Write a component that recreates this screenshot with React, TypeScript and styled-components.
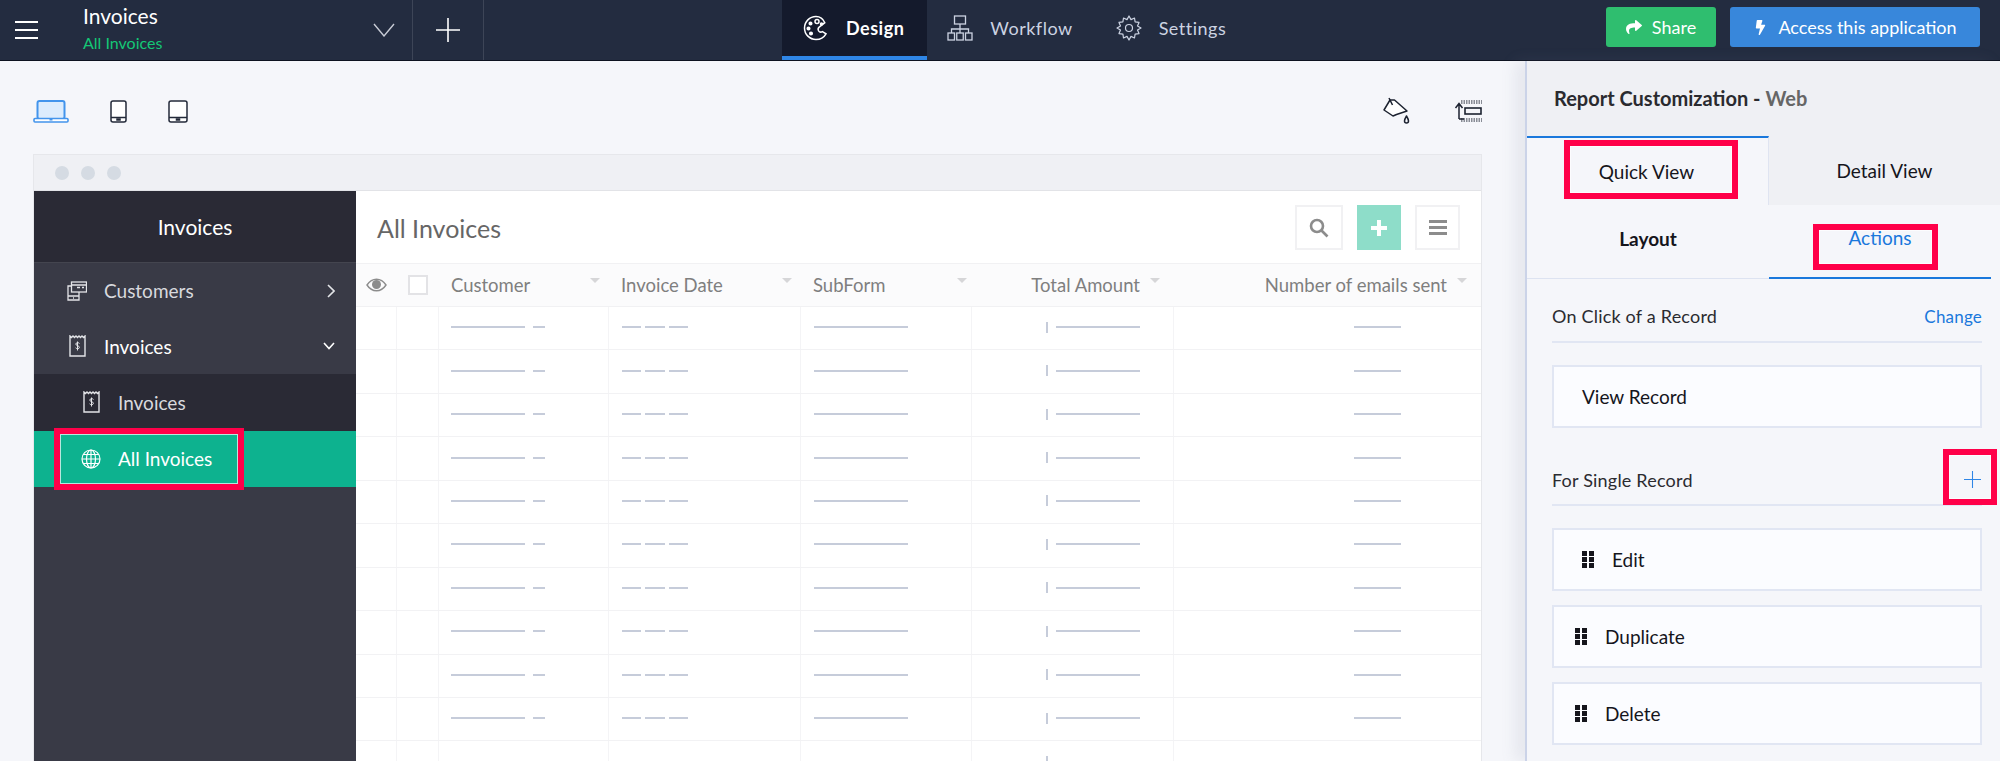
import React from 'react';
import styled, { createGlobalStyle } from 'styled-components';
import { FaBolt, FaShare } from 'react-icons/fa';

const GlobalStyle = createGlobalStyle`
  html, body {
    margin: 0;
    padding: 0;
    background: #f5f6fa;
    font-family: "Lato", "Liberation Sans", sans-serif;
  }
  * { box-sizing: border-box; }
`;

const Page = styled.div`
  width: 2000px;
  height: 761px;
  overflow: hidden;
  display: flex;
  flex-direction: column;
`;

/* top bar */
const TopBar = styled.header`
  flex: none;
  height: 61px;
  background: #232c40;
  border-bottom: 1px solid #0d1220;
  display: flex;
  align-items: stretch;
`;

const BurgerCell = styled.div`
  width: 83px;
  padding-left: 15px;
  display: flex;
  align-items: center;
  color: #fff;
`;

const AppTitle = styled.div`
  width: 329px;
  display: flex;
  align-items: center;
  justify-content: space-between;
  padding-right: 17px;
  color: #fff;
`;

const AppName = styled.div`
  font-size: 21px;
  line-height: 26px;
  margin-top: -2px;
`;

const AppSub = styled.div`
  font-size: 16px;
  line-height: 24px;
  margin-top: 2px;
  color: #14c776;
`;

const PlusCell = styled.div`
  width: 72px;
  border-left: 1px solid #3d4557;
  border-right: 1px solid #3d4557;
  display: flex;
  align-items: center;
  justify-content: center;
  color: #fff;
`;

const Nav = styled.nav`
  margin-left: 298px;
  display: flex;
`;

const NavTab = styled.div<{ $active?: boolean }>`
  display: flex;
  align-items: center;
  gap: 17px;
  padding: 0 23px 0 ${p => (p.$active ? 21 : 20)}px;
  background: ${p => (p.$active ? '#141a2c' : 'transparent')};
  border-bottom: 4px solid ${p => (p.$active ? '#2f86e6' : 'transparent')};
  color: ${p => (p.$active ? '#fff' : '#ccd3e2')};
  font-size: 18px;
  font-weight: ${p => (p.$active ? 700 : 400)};
  letter-spacing: 0.5px;
`;

const TopActions = styled.div`
  margin-left: auto;
  padding: 7px 20px 0 0;
  display: flex;
  align-items: flex-start;
  gap: 14px;
`;

const TopButton = styled.div<{ $color: string; $width: number }>`
  width: ${p => p.$width}px;
  height: 40px;
  border-radius: 3px;
  background: ${p => p.$color};
  color: #fff;
  font-size: 18px;
  display: flex;
  align-items: center;
  justify-content: center;
  gap: 10px;
`;

/* work area */
const Main = styled.div`
  flex: 1;
  min-height: 0;
  display: flex;
`;

const Canvas = styled.main`
  flex: 1;
  min-width: 0;
  padding: 0 43px 0 33px;
  display: flex;
  flex-direction: column;
`;

const CanvasTools = styled.div`
  flex: none;
  height: 93px;
  padding-top: 7px;
  display: flex;
  align-items: center;
`;

const DeviceGroup = styled.div`
  display: flex;
  align-items: center;
  gap: 41px;
`;

const ToolGroup = styled.div`
  margin-left: auto;
  display: flex;
  align-items: center;
  gap: 44px;
  color: #1c2230;
`;

const Window = styled.div`
  flex: 1;
  min-height: 0;
  display: flex;
  flex-direction: column;
  border: 1px solid #e6e7eb;
  border-bottom: 0;
  background: #fff;
`;

const WindowChrome = styled.div`
  flex: none;
  height: 36px;
  background: #eff0f4;
  border-bottom: 1px solid #e2e3e7;
  padding-left: 21px;
  display: flex;
  align-items: center;
  gap: 12px;
`;

const Dot = styled.span`
  width: 14px;
  height: 14px;
  border-radius: 50%;
  background: #d5dbe3;
`;

const WindowBody = styled.div`
  flex: 1;
  min-height: 0;
  display: flex;
`;

/* preview sidebar */
const Sidebar = styled.aside`
  flex: none;
  width: 322px;
  background: #393a46;
  display: flex;
  flex-direction: column;
`;

const SideHead = styled.div`
  height: 72px;
  background: #2a2a35;
  border-bottom: 1px solid #44454f;
  color: #fff;
  font-size: 21px;
  display: flex;
  align-items: center;
  justify-content: center;
`;

const SideRow = styled.div<{ $tone?: 'sub' | 'active'; $bright?: boolean }>`
  position: relative;
  height: ${p => (p.$tone ? 56.5 : 55.5)}px;
  padding: 0 21px 0 ${p => (p.$tone ? 47 : 33)}px;
  display: flex;
  align-items: center;
  gap: 17px;
  font-size: 19px;
  color: ${p => (p.$bright ? '#fff' : '#d8d9de')};
  background: ${p => (p.$tone === 'sub' ? '#2a2a35' : p.$tone === 'active' ? '#0db28f' : 'transparent')};
`;

const SideIcon = styled.span`
  width: 20px;
  display: flex;
  justify-content: center;
`;

const SideArrow = styled.span`
  margin-left: auto;
  display: flex;
`;

/* preview table */
const Report = styled.section`
  flex: 1;
  min-width: 0;
  display: flex;
  flex-direction: column;
  overflow: hidden;
`;

const ReportTop = styled.div`
  flex: none;
  height: 72px;
  padding: 14px 21px 13px 21px;
  display: flex;
  align-items: center;
`;

const ReportTitle = styled.h2`
  margin: 0 auto 0 0;
  font-size: 25px;
  font-weight: 400;
  color: #666;
`;

const SquareButton = styled.div<{ $width: number; $fill?: boolean }>`
  width: ${p => p.$width}px;
  height: 45px;
  margin-left: 14px;
  border: ${p => (p.$fill ? 'none' : '2px solid #f1f1f3')};
  background: ${p => (p.$fill ? '#8eddc9' : '#fff')};
  color: ${p => (p.$fill ? '#fff' : '#8c8c8c')};
  display: flex;
  align-items: center;
  justify-content: center;
`;

const COLUMNS = '41px 42px 170px 192px 171px 202px 308px';

const HeadRow = styled.div`
  flex: none;
  height: 44px;
  display: grid;
  grid-template-columns: ${COLUMNS};
  background: #fbfbfc;
  border-top: 1px solid #f1f1f3;
  border-bottom: 1px solid #f1f1f3;
`;

const HeadCell = styled.div<{ $end?: boolean; $pad?: number }>`
  display: flex;
  align-items: center;
  justify-content: ${p => (p.$end ? 'flex-end' : 'space-between')};
  gap: 10px;
  padding: 0 ${p => p.$pad ?? 9}px 0 12px;
  font-size: 18.5px;
  color: #7f7f7f;
  white-space: nowrap;
`;

const IconCell = styled.div`
  display: flex;
  align-items: center;
  justify-content: center;
`;

const CheckBox = styled.span`
  width: 20px;
  height: 20px;
  background: #fff;
  border: 2px solid #e3e3e6;
`;

const Caret = styled.span`
  flex: none;
  width: 0;
  height: 0;
  margin-top: -10px;
  border-left: 5px solid transparent;
  border-right: 5px solid transparent;
  border-top: 5px solid #d6d6d8;
`;

const DataRow = styled.div`
  flex: none;
  height: 43.45px;
  display: grid;
  grid-template-columns: ${COLUMNS};
  border-bottom: 1px solid #f2f2f4;
`;

const DataCell = styled.div<{ $align?: 'end'; $left?: number; $right?: number; $gap?: number }>`
  display: flex;
  align-items: center;
  justify-content: ${p => (p.$align === 'end' ? 'flex-end' : 'flex-start')};
  gap: ${p => p.$gap ?? 8}px;
  padding: 0 ${p => p.$right ?? 0}px 2px ${p => p.$left ?? 0}px;
  border-right: 1px solid #f4f4f6;
`;

const Dash = styled.span<{ $w: number }>`
  width: ${p => p.$w}px;
  height: 2px;
  background: #c6ccda;
`;

const Tick = styled.span`
  width: 2px;
  height: 11px;
  background: #c6ccda;
`;

/* customization panel */
const Panel = styled.aside`
  flex: none;
  width: 475px;
  background: #f5f6fa;
  border-left: 2px solid #cbd3e8;
  box-shadow: -10px 0 14px rgba(120, 130, 160, 0.12);
  display: flex;
  flex-direction: column;
  position: relative;
`;

const PanelHead = styled.div`
  height: 75px;
  padding: 0 0 1px 27px;
  background: #eff0f4;
  display: flex;
  align-items: center;
  font-size: 20px;
  font-weight: 700;
  color: #2a2a2f;
`;

const PanelHeadMuted = styled.span`
  color: #666;
  margin-left: 5px;
`;

const ViewTabs = styled.div`
  height: 69px;
  display: flex;
`;

const ViewTab = styled.div<{ $active?: boolean }>`
  position: relative;
  display: flex;
  align-items: center;
  justify-content: center;
  width: ${p => (p.$active ? '242px' : 'auto')};
  flex: ${p => (p.$active ? 'none' : 1)};
  padding-right: ${p => (p.$active ? '2px' : '0')};
  font-size: 19px;
  color: #15151c;
  background: ${p => (p.$active ? '#f5f6fa' : '#eff0f4')};
  border-top: ${p => (p.$active ? '2px solid #1a78dc' : 'none')};
  border-right: ${p => (p.$active ? '1px solid #dfe4f1' : 'none')};
`;

const SubTabs = styled.div`
  height: 74px;
  display: flex;
`;

const SubTab = styled.div<{ $active?: boolean }>`
  position: relative;
  width: ${p => (p.$active ? 222 : 242)}px;
  display: flex;
  align-items: center;
  justify-content: center;
  font-size: 19px;
  padding-bottom: 7px;
  color: ${p => (p.$active ? '#1a78dc' : '#15151c')};
  font-weight: ${p => (p.$active ? 400 : 700)};
  border-bottom: ${p => (p.$active ? '2px solid #1a78dc' : '1px solid #dde3f1')};
`;

const PanelBody = styled.div`
  padding: 0 18px 0 25px;
  display: flex;
  flex-direction: column;
`;

const SectionRow = styled.div<{ $tall?: boolean }>`
  position: relative;
  height: ${p => (p.$tall ? 78 : 64)}px;
  padding-bottom: ${p => (p.$tall ? 13 : 14)}px;
  border-bottom: 2px solid #e1e6f3;
  display: flex;
  align-items: flex-end;
  justify-content: space-between;
  font-size: 18px;
  color: #2b2b30;
  letter-spacing: 0.2px;
`;

const ChangeLink = styled.span`
  color: #1a78dc;
  font-size: 17px;
`;

const PlusIcon = styled.span`
  color: #2f86e6;
  display: flex;
  margin: 0 1px 3px 0;
`;

const Card = styled.div<{ $drag?: boolean }>`
  height: 63px;
  margin-top: ${p => (p.$drag ? 14 : 22)}px;
  padding-left: ${p => (p.$drag ? 21 : 28)}px;
  background: #fbfcff;
  border: 2px solid #e1e6f3;
  display: flex;
  align-items: center;
  gap: 18px;
  font-size: 19px;
  color: #15151c;
`;

/* red annotation frames drawn over the screenshot */
const Mark = styled.span`
  position: absolute;
  border: 6px solid #ff0049;
  box-shadow: inset 0 0 0 1px rgba(255, 255, 255, 0.7);
  pointer-events: none;
`;

const QuickMark = styled(Mark)`
  left: 37px;
  top: 2px;
  width: 174px;
  height: 59px;
`;

const ActionsMark = styled(Mark)`
  left: 44px;
  top: 19px;
  width: 125px;
  height: 46px;
`;

const RecordMark = styled(Mark)`
  left: 20px;
  top: -3px;
  width: 190px;
  height: 62px;
`;

const AddMark = styled(Mark)`
  right: -15px;
  top: 21px;
  width: 54px;
  height: 56px;
`;

/* drawn icons */
const Burger = () => (
  <svg width="24" height="18" viewBox="0 0 24 18" fill="none" stroke="currentColor" strokeWidth="2">
    <path d="M0 1h23M0 9h23M0 17h23" />
  </svg>
);

const ChevronDown = () => (
  <svg width="22" height="14" viewBox="0 0 22 14" fill="none" stroke="#c8ccd6" strokeWidth="1.4">
    <path d="M1 1l10 12L21 1" />
  </svg>
);

const ThinPlus = ({ size = 24 }: { size?: number }) => (
  <svg width={size} height={size} viewBox="0 0 24 24" fill="none" stroke="currentColor" strokeWidth={size > 20 ? 1.6 : 1.5}>
    <path d="M12 0v24M0 12h24" />
  </svg>
);

const PaletteIcon = () => (
  <svg width="26" height="26" viewBox="0 0 26 26" fill="none" stroke="currentColor" strokeWidth="1.5">
    <path d="M13 1.5C6.6 1.5 1.5 6.6 1.5 13S6.6 24.5 13 24.5c4.5 0 8-2.2 10-5.7l-3.6-2.2c-1.4.8-3 .4-3.8-.8-.8-1.3-.5-2.8.6-3.7l5.6-4.4C20.200 4 16.800 1.500 13 1.500z" />
    <circle cx="14" cy="6.500" r="2" />
    <circle cx="18.500" cy="9" r="1" fill="currentColor" />
    <circle cx="7.500" cy="8.500" r="1.300" fill="currentColor" />
    <circle cx="5.500" cy="13.500" r="1.300" fill="currentColor" />
    <circle cx="8" cy="18.500" r="1.300" fill="currentColor" />
  </svg>
);

const FlowIcon = () => (
  <svg width="26" height="26" viewBox="0 0 26 26" fill="none" stroke="currentColor" strokeWidth="1.3">
    <rect x="7.500" y="1" width="11" height="8" />
    <path d="M13 9v5M4.500 18v-4h17v4M13 14v4" />
    <rect x="1" y="18" width="6.500" height="7" />
    <rect x="9.750" y="18" width="6.500" height="7" />
    <rect x="18.500" y="18" width="6.500" height="7" />
  </svg>
);

const GearIcon = () => (
  <svg width="26" height="26" viewBox="0 0 26 26" fill="none" stroke="currentColor" strokeWidth="1.2" strokeLinejoin="round">
    <path d="M13 1l2 3.600 3.500-1.600.6 3.900 3.900.5-1.500 3.600L25 13l-3.500 2 1.500 3.600-3.900.5-.6 3.900-3.500-1.600-2 3.600-2-3.600-3.500 1.600-.6-3.900-3.900-.5L4.500 15 1 13l3.500-2L3 7.400l3.900-.5.6-3.900L11 4.600z" />
    <circle cx="13" cy="13" r="3.500" />
  </svg>
);

const LaptopIcon = () => (
  <svg width="36" height="23" viewBox="0 0 36 23">
    <rect x="4.500" y="1" width="27" height="18" rx="2" fill="#dcecfd" stroke="#4394ec" strokeWidth="2" />
    <rect x="1" y="18.500" width="34" height="3.500" rx="1" fill="#fff" stroke="#4394ec" strokeWidth="1.600" />
    <rect x="16.500" y="18.500" width="3" height="2" fill="#4394ec" />
  </svg>
);

const PhoneIcon = () => (
  <svg width="17" height="23" viewBox="0 0 17 23" fill="none" stroke="#232a3a" strokeWidth="1.500">
    <rect x="1" y="1" width="15" height="21" rx="2" fill="#fff" />
    <path d="M1 17.500h15" />
    <rect x="7" y="19" width="3" height="1" fill="#232a3a" />
  </svg>
);

const TabletIcon = () => (
  <svg width="20" height="23" viewBox="0 0 20 23" fill="none" stroke="#232a3a" strokeWidth="1.500">
    <rect x="1" y="1" width="18" height="21" rx="2" fill="#fff" />
    <path d="M1 17.500h18" />
    <rect x="8.500" y="19" width="3" height="1" fill="#232a3a" />
  </svg>
);

const BucketIcon = () => (
  <svg width="28" height="28" viewBox="0 0 28 28" fill="none" stroke="currentColor" strokeWidth="1.500" strokeLinejoin="round">
    <path d="M8 3L2 13l9 6 3.500-1.500L25 14 12.500 3z" fill="#fff" />
    <path d="M7 1l3.500 7" />
    <path d="M24.500 19c-1.200 2-2 3.500-2 5a2 2 0 0 0 4 0c0-1.500-.8-3-2-5z" />
  </svg>
);

const MoveRowIcon = () => (
  <svg width="28" height="24" viewBox="0 0 28 24" fill="none" stroke="currentColor">
    <path d="M7 2h21M7 4h21M7 20h21M7 22h21" strokeDasharray="1.500 1" strokeWidth="1" />
    <rect x="11" y="9" width="16" height="6" strokeWidth="1.600" />
    <path d="M5 20V5M1.500 9L5 4.500 8.500 9M5 20h5" strokeWidth="1.500" />
  </svg>
);

const SearchIcon = () => (
  <svg width="20" height="20" viewBox="0 0 20 20" fill="none" stroke="currentColor" strokeWidth="2.600">
    <circle cx="8" cy="8" r="6" />
    <path d="M12.500 12.500L18.500 18.500" />
  </svg>
);

const FatPlus = () => (
  <svg width="16" height="16" viewBox="0 0 16 16" fill="currentColor">
    <path d="M6 0h4v6h6v4h-6v6H6v-6H0V6h6z" />
  </svg>
);

const ListIcon = () => (
  <svg width="18" height="15" viewBox="0 0 18 15" fill="currentColor">
    <path d="M0 0h18v3H0zM0 6h18v3H0zM0 12h18v3H0z" />
  </svg>
);

const EyeIcon = () => (
  <svg width="21" height="14" viewBox="0 0 21 14" fill="none" stroke="#8c8c8c" strokeWidth="1.400">
    <path d="M1 7c2.500-3.800 5.700-5.800 9.500-5.800S17.500 3.200 20 7c-2.500 3.800-5.700 5.800-9.500 5.800S3.500 10.800 1 7z" />
    <circle cx="10.500" cy="6.500" r="4.500" fill="#8c8c8c" stroke="none" />
  </svg>
);

const CustomersIcon = () => (
  <svg width="20" height="20" viewBox="0 0 20 20" fill="none" stroke="#e3e4e8" strokeWidth="1.300">
    <rect x="4.500" y="1" width="15" height="10" />
    <path d="M4.500 4h15M10 6.500h3M15 6.500h2" />
    <path d="M4 5H1v14h11v-8M1 15h11M6 17h1" />
  </svg>
);

const ReceiptIcon = () => (
  <svg width="17" height="22" viewBox="0 0 17 22" fill="none" stroke="#e3e4e8" strokeWidth="1.400">
    <path d="M1 1l1.500 1.500L4 1l1.500 1.500L7 1l1.500 1.500L10 1l1.500 1.500L13 1l1.500 1.500L16 1v20H1z" />
    <path d="M10.500 8.500C10 7.500 7 7.200 6.800 9c-.2 2 3.700 1.300 3.600 3.400-.1 1.700-3.200 1.500-3.800.4M8.500 6.500v9" strokeWidth="1" />
  </svg>
);

const GlobeIcon = () => (
  <svg width="20" height="20" viewBox="0 0 20 20" fill="none" stroke="#fff" strokeWidth="1.200">
    <circle cx="10" cy="10" r="9" />
    <ellipse cx="10" cy="10" rx="4.500" ry="9" />
    <path d="M10 1v18M1 10h18M2.300 5.500h15.400M2.300 14.500h15.400" />
  </svg>
);

const ArrowRight = () => (
  <svg width="8" height="14" viewBox="0 0 8 14" fill="none" stroke="#e3e4e8" strokeWidth="1.600">
    <path d="M1 1l6 6-6 6" />
  </svg>
);

const ArrowDown = () => (
  <svg width="12" height="8" viewBox="0 0 12 8" fill="none" stroke="#fff" strokeWidth="1.600">
    <path d="M1 1l5 5.500L11 1" />
  </svg>
);

const DragIcon = () => (
  <svg width="12" height="17" viewBox="0 0 12 17" fill="#15151c">
    <path d="M0 0h5v5H0zM7 0h5v5H7zM0 6h5v5H0zM7 6h5v5H7zM0 12h5v5H0zM7 12h5v5H7z" />
  </svg>
);

const ROW_COUNT = 11;
const rows = Array.from({ length: ROW_COUNT }, (_, i) => i);

const App: React.FC = () => (
  <>
    <GlobalStyle />
    <Page>
      <TopBar>
        <BurgerCell>
          <Burger />
        </BurgerCell>
        <AppTitle>
          <div>
            <AppName>Invoices</AppName>
            <AppSub>All Invoices</AppSub>
          </div>
          <ChevronDown />
        </AppTitle>
        <PlusCell>
          <ThinPlus />
        </PlusCell>
        <Nav>
          <NavTab $active>
            <PaletteIcon />
            Design
          </NavTab>
          <NavTab>
            <FlowIcon />
            Workflow
          </NavTab>
          <NavTab>
            <GearIcon />
            Settings
          </NavTab>
        </Nav>
        <TopActions>
          <TopButton $color="#2fbe6f" $width={110}>
            <FaShare size={16} />
            Share
          </TopButton>
          <TopButton $color="#3887db" $width={250}>
            <FaBolt size={15} />
            Access this application
          </TopButton>
        </TopActions>
      </TopBar>

      <Main>
        <Canvas>
          <CanvasTools>
            <DeviceGroup>
              <LaptopIcon />
              <PhoneIcon />
              <TabletIcon />
            </DeviceGroup>
            <ToolGroup>
              <BucketIcon />
              <MoveRowIcon />
            </ToolGroup>
          </CanvasTools>

          <Window>
            <WindowChrome>
              <Dot />
              <Dot />
              <Dot />
            </WindowChrome>
            <WindowBody>
              <Sidebar>
                <SideHead>Invoices</SideHead>
                <SideRow>
                  <SideIcon>
                    <CustomersIcon />
                  </SideIcon>
                  Customers
                  <SideArrow>
                    <ArrowRight />
                  </SideArrow>
                </SideRow>
                <SideRow $bright>
                  <SideIcon>
                    <ReceiptIcon />
                  </SideIcon>
                  Invoices
                  <SideArrow>
                    <ArrowDown />
                  </SideArrow>
                </SideRow>
                <SideRow $tone="sub">
                  <SideIcon>
                    <ReceiptIcon />
                  </SideIcon>
                  Invoices
                </SideRow>
                <SideRow $tone="active" $bright>
                  <SideIcon>
                    <GlobeIcon />
                  </SideIcon>
                  All Invoices
                  <RecordMark />
                </SideRow>
              </Sidebar>

              <Report>
                <ReportTop>
                  <ReportTitle>All Invoices</ReportTitle>
                  <SquareButton $width={48}>
                    <SearchIcon />
                  </SquareButton>
                  <SquareButton $width={44} $fill>
                    <FatPlus />
                  </SquareButton>
                  <SquareButton $width={45}>
                    <ListIcon />
                  </SquareButton>
                </ReportTop>
                <HeadRow>
                  <IconCell>
                    <EyeIcon />
                  </IconCell>
                  <IconCell>
                    <CheckBox />
                  </IconCell>
                  <HeadCell>
                    Customer
                    <Caret />
                  </HeadCell>
                  <HeadCell>
                    Invoice Date
                    <Caret />
                  </HeadCell>
                  <HeadCell $pad={5}>
                    SubForm
                    <Caret />
                  </HeadCell>
                  <HeadCell $end $pad={14}>
                    Total Amount
                    <Caret />
                  </HeadCell>
                  <HeadCell $end $pad={15}>
                    Number of emails sent
                    <Caret />
                  </HeadCell>
                </HeadRow>
                {rows.map(i => (
                  <DataRow key={i}>
                    <DataCell />
                    <DataCell />
                    <DataCell $left={12}>
                      <Dash $w={74} />
                      <Dash $w={12} />
                    </DataCell>
                    <DataCell $left={13} $gap={4}>
                      <Dash $w={19} />
                      <Dash $w={20} />
                      <Dash $w={19} />
                    </DataCell>
                    <DataCell $left={13}>
                      <Dash $w={94} />
                    </DataCell>
                    <DataCell $align="end" $right={33}>
                      <Tick />
                      <Dash $w={84} />
                    </DataCell>
                    <DataCell $left={180}>
                      <Dash $w={47} />
                    </DataCell>
                  </DataRow>
                ))}
              </Report>
            </WindowBody>
          </Window>
        </Canvas>

        <Panel>
          <PanelHead>
            Report Customization -<PanelHeadMuted>Web</PanelHeadMuted>
          </PanelHead>
          <ViewTabs>
            <ViewTab $active>
              Quick View
              <QuickMark />
            </ViewTab>
            <ViewTab>Detail View</ViewTab>
          </ViewTabs>
          <SubTabs>
            <SubTab>Layout</SubTab>
            <SubTab $active>
              Actions
              <ActionsMark />
            </SubTab>
          </SubTabs>
          <PanelBody>
            <SectionRow>
              On Click of a Record
              <ChangeLink>Change</ChangeLink>
            </SectionRow>
            <Card>View Record</Card>
            <SectionRow $tall>
              For Single Record
              <PlusIcon>
                <ThinPlus size={17} />
              </PlusIcon>
              <AddMark />
            </SectionRow>
            <Card>
              <DragIcon />
              Edit
            </Card>
            <Card $drag>
              <DragIcon />
              Duplicate
            </Card>
            <Card $drag>
              <DragIcon />
              Delete
            </Card>
          </PanelBody>
        </Panel>
      </Main>
    </Page>
  </>
);

export default App;
